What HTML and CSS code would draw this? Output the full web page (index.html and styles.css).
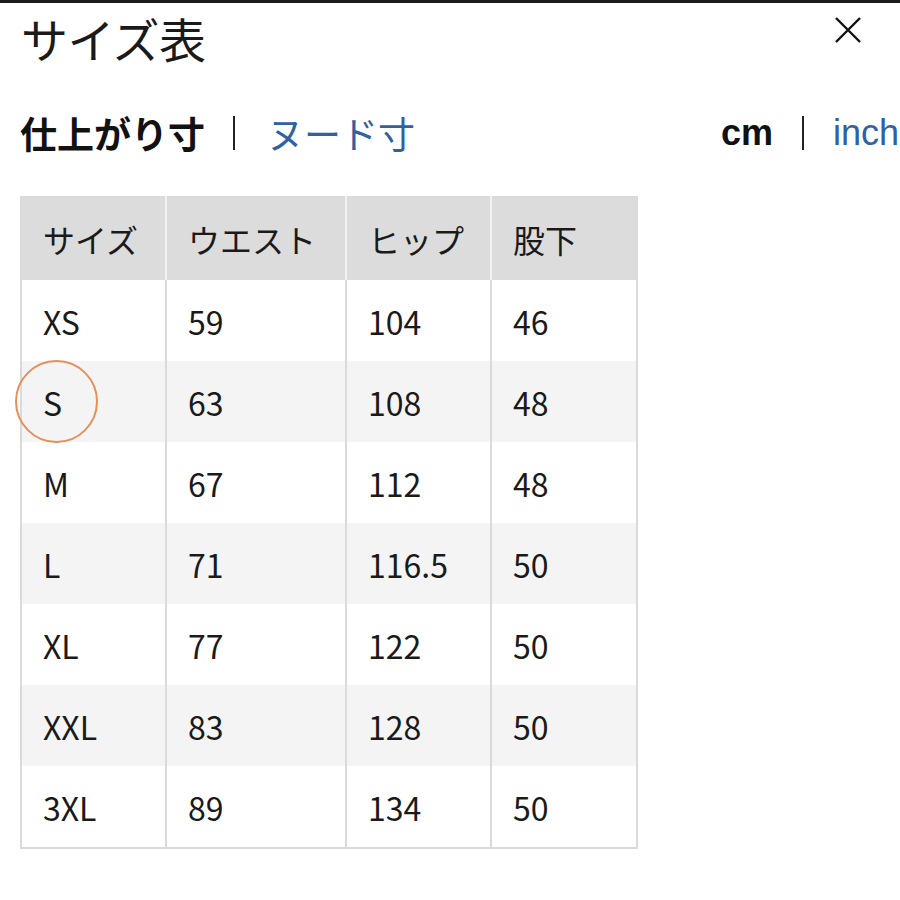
FILE: index.html
```html
<!DOCTYPE html>
<html lang="ja">
<head>
<meta charset="utf-8">
<link rel="stylesheet" href="styles.css">
</head>
<body>
<div class="topbar"></div>
<div class="page">
  <div class="head">
    <h1 class="title">サイズ表</h1>
    <div class="close">
      <svg width="28" height="28" viewBox="0 0 28 28"><path d="M2 2 L26 26 M26 2 L2 26" stroke="#111" stroke-width="2.4" fill="none"/></svg>
    </div>
  </div>
  <div class="tabs">
    <div class="seg"><span class="on">仕上がり寸</span><span class="sep"></span><span class="off">ヌード寸</span></div>
    <div class="seg units"><span class="on cm">cm</span><span class="sep"></span><span class="off inch">inch</span></div>
  </div>
  <div class="tablewrap">
    <table class="size">
      <colgroup><col class="c1"><col class="c2"><col class="c3"><col class="c4"></colgroup>
      <thead><tr><th>サイズ</th><th>ウエスト</th><th>ヒップ</th><th>股下</th></tr></thead>
      <tbody>
        <tr><td>XS</td><td>59</td><td>104</td><td>46</td></tr>
        <tr><td>S</td><td>63</td><td>108</td><td>48</td></tr>
        <tr><td>M</td><td>67</td><td>112</td><td>48</td></tr>
        <tr><td>L</td><td>71</td><td>116.5</td><td>50</td></tr>
        <tr><td>XL</td><td>77</td><td>122</td><td>50</td></tr>
        <tr><td>XXL</td><td>83</td><td>128</td><td>50</td></tr>
        <tr><td>3XL</td><td>89</td><td>134</td><td>50</td></tr>
      </tbody>
    </table>
    <div class="mark"></div>
  </div>
</div>
</body>
</html>
```
FILE: styles.css
```css
html, body { margin: 0; padding: 0; background: #fff; }
body {
  font-family: "Noto Sans CJK JP", "Noto Sans", sans-serif;
  color: #1a1a1a;
  width: 900px;
  height: 900px;
  overflow: hidden;
}
.topbar { height: 3px; background: #1c1c1c; }
.page { padding: 0 0 0 20px; }
.head {
  display: flex;
  justify-content: space-between;
  align-items: flex-start;
  height: 92px;
}
.title {
  margin: 0 0 0 1px;
  font-size: 47px;
  font-weight: 400;
  line-height: normal;
  letter-spacing: -0.5px;
}
.close { margin: 13px 38px 0 0; }
.tabs {
  display: flex;
  justify-content: space-between;
  align-items: center;
  height: 76px;
  margin-bottom: 25px;
}
.seg { display: flex; align-items: center; white-space: nowrap; }
.seg .on { font-size: 37px; font-weight: 700; color: #111; line-height: 40px; letter-spacing: 0; }
.seg .off { font-size: 37px; font-weight: 400; color: #2e62a3; line-height: 40px; }
.seg .sep { width: 2px; height: 34px; background: #222; margin: 0 32px 0 28px; }
.units { margin-right: 1px; }
.units .sep { margin: 0 29px 0 29px; }
.units .cm { font-family: "Liberation Sans", Arial, sans-serif; font-size: 36px; }
.units .inch { font-family: "Liberation Sans", Arial, sans-serif; font-size: 36px; font-weight: 400; }
.tablewrap { position: relative; width: 617px; }
.size {
  border-collapse: collapse;
  table-layout: fixed;
  width: 616px;
  border: 2px solid #dadada;
}
.c1 { width: 145px; }
.c2 { width: 180px; }
.c3 { width: 145px; }
.c4 { width: 146px; }
.size th, .size td {
  text-align: left;
  padding: 0 0 0 21px;
  font-size: 32px;
  font-weight: 400;
  color: #1a1a1a;
  line-height: 40px;
}
.size th {
  background: #dcdcdc;
  height: 82px;
  border-left: 2px solid #f2f2f2;
}
.size td {
  height: 81px;
  border-left: 2px solid #dadada;
}
.size th:first-child, .size td:first-child { border-left: none; }
.size tbody tr:nth-child(even) td { background: #f4f4f4; }
.mark {
  position: absolute;
  left: -5px;
  top: 164px;
  width: 79px;
  height: 79px;
  border: 2px solid #e58f5a;
  border-radius: 50%;
}
```
